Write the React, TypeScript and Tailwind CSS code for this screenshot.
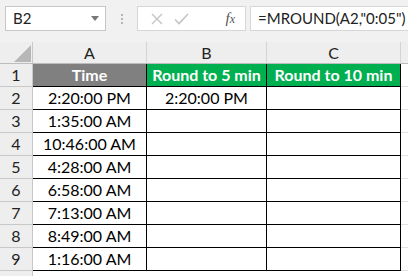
import React from 'react';

const times = [
  '2:20:00 PM',
  '1:35:00 AM',
  '10:46:00 AM',
  '4:28:00 AM',
  '6:58:00 AM',
  '7:13:00 AM',
  '8:49:00 AM',
  '1:16:00 AM',
];

const font = { fontFamily: 'Lato, "Open Sans", sans-serif' };

function ColHeader({ label, w }: { label: string; w: string }) {
  return (
    <div className={`${w} h-full shrink-0 flex items-center justify-center border-r border-[#d4d4d4] text-[16px] text-[#222]`}>
      {label}
    </div>
  );
}

function RowHeader({ n }: { n: number }) {
  return (
    <div className="w-[33px] h-full shrink-0 flex items-center justify-center bg-[#eeeeee] border-r border-b border-[#c8c8c8] text-[16px] text-[#222]">
      {n}
    </div>
  );
}

export default function App() {
  return (
    <div className="w-[408px] h-[276px] overflow-hidden bg-[#f1f1f1] select-none" style={font}>
      {/* formula bar */}
      <div className="h-[42px] flex items-start pt-[6px] pl-[5px]">
        <div className="w-[101px] h-[25px] bg-white border border-[#c6c6c6] flex items-center justify-between pl-[7px] pr-[6px] text-[15px] text-[#222]">
          <span>B2</span>
          <svg width="8" height="5" viewBox="0 0 8 5"><path d="M0 0h8L4 5z" fill="#777" /></svg>
        </div>
        <div className="w-[31px] h-[25px] flex flex-col items-center justify-center gap-[2px]">
          <span className="w-[2px] h-[2px] bg-[#b5b5b5]" />
          <span className="w-[2px] h-[2px] bg-[#b5b5b5]" />
          <span className="w-[2px] h-[2px] bg-[#b5b5b5]" />
        </div>
        <div className="w-[109px] h-[25px] bg-white border border-[#d6d6d6] flex items-center pl-[13px] pr-[10px]">
          <svg width="12" height="12" viewBox="0 0 12 12"><path d="M1 1l10 10M11 1L1 11" stroke="#c4c4c4" strokeWidth="1.4" /></svg>
          <svg className="ml-[11px]" width="15" height="12" viewBox="0 0 15 12"><path d="M1 6.5l4 4L14 1" stroke="#c4c4c4" strokeWidth="1.6" fill="none" /></svg>
          <span className="ml-auto text-[15px] italic text-[#555]" style={{ fontFamily: '"Liberation Serif", serif' }}>
            f<span className="text-[12px]">x</span>
          </span>
        </div>
        <div className="ml-[4px] flex-1 h-[25px] bg-white border border-[#d6d6d6] border-r-0 flex items-center pl-[7px] text-[15px] text-[#222]">
          =MROUND(A2,"0:05")
        </div>
      </div>

      {/* column headers */}
      <div className="h-[22px] flex bg-[#eeeeee] border-b border-[#bdbdbd]">
        <div className="w-[33px] h-full shrink-0 border-r border-[#c8c8c8] relative">
          <svg className="absolute right-[1px] bottom-[1px]" width="17" height="17" viewBox="0 0 17 17"><path d="M17 0V17H0z" fill="#b7b7b7" /></svg>
        </div>
        <ColHeader label="A" w="w-[114px]" />
        <ColHeader label="B" w="w-[120px]" />
        <ColHeader label="C" w="w-[134px]" />
        <div className="flex-1" />
      </div>

      {/* row 1 */}
      <div className="h-[23px] flex">
        <RowHeader n={1} />
        <div className="w-[114px] shrink-0 bg-[#808080] border-r border-b border-black flex items-center justify-center text-white font-bold text-[16px]">Time</div>
        <div className="w-[120px] shrink-0 bg-[#00b050] border-r border-b border-black flex items-center justify-center text-white font-bold text-[16px]">Round to 5 min</div>
        <div className="w-[134px] shrink-0 bg-[#00b050] border-r border-b border-black flex items-center justify-center text-white font-bold text-[16px]">Round to 10 min</div>
        <div className="flex-1 bg-white border-b border-[#e1e1e1]" />
      </div>

      {times.map((t, i) => (
        <div key={i} className="h-[23px] flex">
          <RowHeader n={i + 2} />
          <div className="w-[114px] shrink-0 bg-white border-r border-b border-black flex items-center justify-center text-[16px] text-black">{t}</div>
          <div className="w-[120px] shrink-0 bg-white border-r border-b border-black flex items-center justify-center text-[16px] text-black">{i === 0 ? '2:20:00 PM' : ''}</div>
          <div className="w-[134px] shrink-0 bg-white border-r border-b border-black" />
          <div className="flex-1 bg-white border-b border-[#e1e1e1]" />
        </div>
      ))}

      <div className="h-[23px] flex">
        <div className="w-[33px] h-full shrink-0 bg-[#eeeeee] border-r border-[#c8c8c8]" />
        <div className="flex-1 bg-white" />
      </div>
    </div>
  );
}
